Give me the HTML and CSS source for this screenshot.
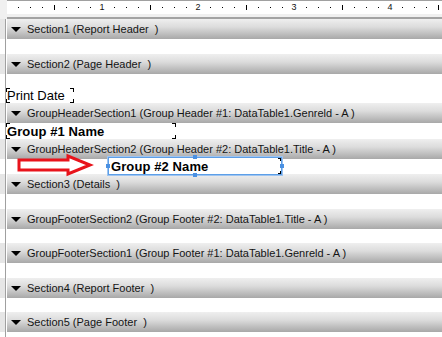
FILE: index.html
```html
<!DOCTYPE html>
<html>
<head>
<meta charset="utf-8">
<link rel="stylesheet" href="styles.css">
</head>
<body>
<div class="designer">
  <div class="top">
    <div class="corner"></div>
    <div class="hruler">
      <div class="nums"><span><b>1</b></span><span><b>2</b></span><span><b>3</b></span><span><b>4</b></span></div>
    </div>
  </div>
  <div class="topsep"><div class="corner"></div><div class="sepmain"></div></div>

  <div class="row band"><div class="vr"></div><div class="bandmain"><i class="tri"></i>Section1 (Report Header  )</div></div>
  <div class="row body h15"><div class="vr"></div><div class="canvas"></div></div>

  <div class="row band"><div class="vr"></div><div class="bandmain"><i class="tri"></i>Section2 (Page Header  )</div></div>
  <div class="row body h29"><div class="vr"></div><div class="canvas">
    <div class="field f-date">Print Date</div>
  </div></div>

  <div class="row band"><div class="vr"></div><div class="bandmain"><i class="tri"></i>GroupHeaderSection1 (Group Header #1: DataTable1.Genreld - A )</div></div>
  <div class="row body h16"><div class="vr"></div><div class="canvas">
    <div class="field bold f-g1">Group #1 Name</div>
  </div></div>

  <div class="row band"><div class="vr"></div><div class="bandmain"><i class="tri"></i>GroupHeaderSection2 (Group Header #2: DataTable1.Title - A )</div></div>
  <div class="row body h15 over"><div class="vr"></div><div class="canvas">
    <svg class="arrow" width="80" height="26" viewBox="0 0 80 26"><polygon points="3,7 52,7 52,3 74,12 52,21 52,17 3,17" fill="#fff" stroke="#e8141c" stroke-width="3" stroke-linejoin="miter"/></svg>
    <div class="field bold f-g2 selected">Group #2 Name<i class="h ht"></i><i class="h hb"></i><i class="h hl"></i><i class="h hr"></i></div>
  </div></div>

  <div class="row band"><div class="vr"></div><div class="bandmain"><i class="tri"></i>Section3 (Details  )</div></div>
  <div class="row body h15"><div class="vr"></div><div class="canvas"></div></div>

  <div class="row band"><div class="vr"></div><div class="bandmain"><i class="tri"></i>GroupFooterSection2 (Group Footer #2: DataTable1.Title - A )</div></div>
  <div class="row body h14"><div class="vr"></div><div class="canvas"></div></div>

  <div class="row band"><div class="vr"></div><div class="bandmain"><i class="tri"></i>GroupFooterSection1 (Group Footer #1: DataTable1.Genreld - A )</div></div>
  <div class="row body h15"><div class="vr"></div><div class="canvas"></div></div>

  <div class="row band"><div class="vr"></div><div class="bandmain"><i class="tri"></i>Section4 (Report Footer  )</div></div>
  <div class="row body h14"><div class="vr"></div><div class="canvas"></div></div>

  <div class="row band"><div class="vr"></div><div class="bandmain"><i class="tri"></i>Section5 (Page Footer  )</div></div>
  <div class="row body h15"><div class="vr"></div><div class="canvas"></div></div>
</div>
</body>
</html>
```

FILE: styles.css
```css
html, body {
  margin: 0;
  padding: 0;
  background: #fff;
}
.designer {
  width: 442px;
  height: 337px;
  overflow: hidden;
  font-family: "Liberation Sans", Arial, sans-serif;
  display: flex;
  flex-direction: column;
}
.top {
  display: flex;
  height: 14px;
  flex: none;
}
.corner {
  width: 7px;
  background: #f0f0f0;
  flex: none;
}
.hruler {
  flex: 1;
  box-sizing: border-box;
  border-top: 1px solid #a0a0a0;
  background:
    repeating-linear-gradient(to right, transparent 0 47px, #000 47px 48px) 0 4px / 100% 5px no-repeat,
    repeating-linear-gradient(to right, transparent 0 11px, #000 11px 12px) 0 6px / 100% 1px no-repeat,
    #fff;
}
.nums {
  display: flex;
  padding-left: 47px;
  font-size: 9px;
  line-height: 13px;
  color: #111;
}
.nums span {
  flex: none;
  width: 96px;
  text-align: center;
}
.nums b {
  font-weight: normal;
  background: #fff;
  padding: 0 1px;
}
.topsep {
  display: flex;
  height: 5px;
  flex: none;
}
.sepmain {
  flex: 1;
  background: #f0f0f0;
  border-bottom: 2px solid #a3a3a3;
}
.row {
  display: flex;
  flex: none;
}
.vr {
  width: 5px;
  flex: none;
  border-right: 1px solid #a0a0a0;
  margin-right: 1px;
}
.band {
  height: 20px;
}
.band .vr {
  background: #e6e6e6;
}
.bandmain {
  flex: 1;
  display: flex;
  align-items: center;
  padding-left: 4px;
  background: linear-gradient(#efefef, #dcdcdc 40%, #a8a8a8);
  font-size: 11px;
  color: #141414;
  white-space: pre;
}
.tri {
  width: 0;
  height: 0;
  border-left: 5px solid transparent;
  border-right: 5px solid transparent;
  border-top: 5px solid #000;
  margin-right: 6px;
}
.h14 { height: 14px; }
.h15 { height: 15px; }
.h16 { height: 16px; }
.h29 { height: 29px; }
.canvas {
  flex: 1;
  position: relative;
  background: #fff;
}
.over {
  position: relative;
  z-index: 2;
}
.field {
  position: absolute;
  box-sizing: border-box;
  color: #000;
  white-space: nowrap;
  background:
    linear-gradient(#000, #000) left top / 4px 1px no-repeat,
    linear-gradient(#000, #000) left top / 1px 4px no-repeat,
    linear-gradient(#000, #000) right top / 4px 1px no-repeat,
    linear-gradient(#000, #000) right top / 1px 4px no-repeat,
    linear-gradient(#000, #000) left bottom / 4px 1px no-repeat,
    linear-gradient(#000, #000) left bottom / 1px 4px no-repeat,
    linear-gradient(#000, #000) right bottom / 4px 1px no-repeat,
    linear-gradient(#000, #000) right bottom / 1px 4px no-repeat;
}
.f-date {
  left: -1px;
  top: 14px;
  width: 68px;
  height: 15px;
  padding: 1px 0 0 1px;
  font-size: 13px;
  line-height: 14px;
}
.bold {
  font-weight: bold;
  font-size: 13px;
  letter-spacing: 0.1px;
}
.f-g1 {
  left: -1px;
  top: 0;
  width: 170px;
  height: 16px;
  padding: 1px 0 0 1px;
  line-height: 15px;
}
.f-g2 {
  left: 101px;
  top: -2px;
  width: 174px;
  height: 18px;
  padding: 1px 0 0 2px;
  line-height: 15px;
}
.selected {
  outline: 1px solid #9ec4f0;
  border: 1px solid #5d9fe8;
  background:
    linear-gradient(#000, #000) right top / 3px 1px no-repeat,
    linear-gradient(#000, #000) right top / 1px 3px no-repeat,
    linear-gradient(#000, #000) right bottom / 3px 1px no-repeat,
    linear-gradient(#000, #000) right bottom / 1px 3px no-repeat,
    #fff;
}
.h {
  position: absolute;
  width: 4px;
  height: 4px;
  background: #4a90e2;
}
.ht { top: -3px; left: 84px; }
.hb { bottom: -3px; left: 84px; }
.hl { left: -3px; top: 6px; }
.hr { right: -3px; top: 6px; }
.arrow {
  position: absolute;
  left: 9px;
  top: -6px;
}
```
